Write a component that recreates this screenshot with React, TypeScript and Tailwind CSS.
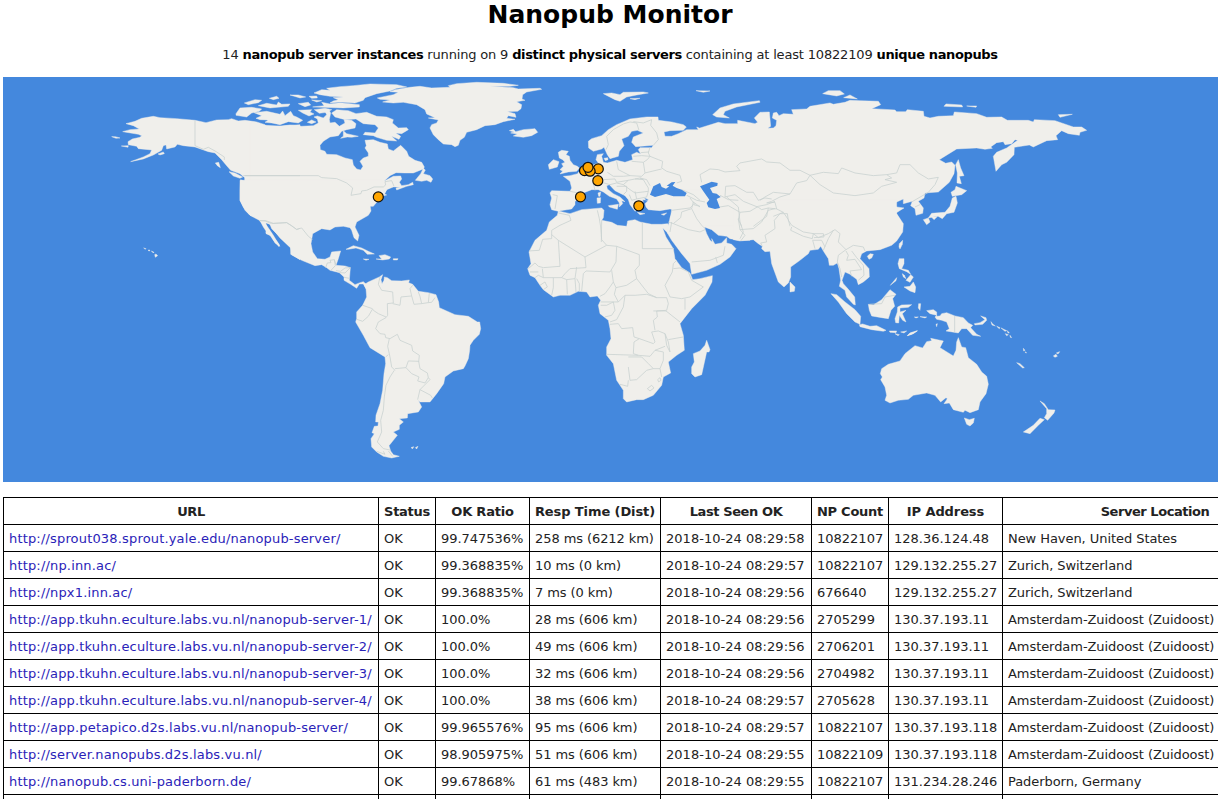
import React from "react";

type Region = {
  x: number;
  y: number;
  land: string[];
  water?: string[];
  borders?: string[];
};

// Every region holds its outlines in thirds of a pixel, relative to its own origin.
const regions: Region[] = [
  {
    x: 100,
    y: 76,
    land: [
      "78,142 105,135 125,126 160,120 180,124 230,127 285,132 318,139 350,131 385,130 395,127 415,134 435,132 470,137 495,145 500,150 545,149 600,145 600,550 575,535 572,515 540,485 520,460 512,445 497,439 500,452 515,475 530,495 540,510 525,500 515,480 498,470 500,460 490,445 478,432 450,417 430,392 420,372 420,345 422,310 434,315 434,304 420,292 392,282 380,268 365,250 345,230 325,226 285,212 250,208 232,204 225,212 200,218 198,205 208,202 190,208 185,222 160,236 130,248 92,256 130,242 150,232 155,221 115,217 110,210 85,205 84,196 97,188 120,183 125,178 115,174 68,166 90,160 118,158 100,148",
      "174,233 190,227 193,232 180,236",
      "346,260 356,258 361,274 352,268",
      "387,286 405,290 428,302 420,306 400,299",
      "35,181 46,181 60,185 48,186",
      "64,209 85,208 84,213",
      "131,515 138,517 136,519",
      "145,521 149,521 149,524 146,524",
      "154,524 162,528 160,530",
      "164,535 168,533 173,538 166,543",
    ],
    borders: ["285,133 285,208 310,219 325,213 345,224 373,242 373,251", "430,298 600,298", "478,433 497,433 520,441 560,439 575,448 590,460 600,456"],
  },
  {
    x: 230,
    y: 76,
    land: [
      "60,138 80,143 105,147 150,150 180,146 215,150 250,148 265,140 262,128 252,122 262,119 280,125 290,115 285,105 295,98 302,110 298,130 300,140 315,138 328,150 345,140 342,130 365,132 378,142 375,155 350,160 335,165 325,178 300,182 280,195 270,207 271,220 285,225 290,234 320,235 345,245 367,250 370,266 380,278 392,281 399,270 390,255 400,245 415,240 415,230 405,215 409,208 405,192 430,190 450,198 472,203 475,218 490,224 512,207 530,225 536,240 555,252 575,258 583,272 580,278 550,290 525,290 498,289 480,298 462,315 490,300 512,299 515,308 508,318 515,328 535,325 548,318 550,325 530,330 500,341 498,335 510,332 490,332 470,340 463,352 470,356 455,360 430,390 60,390",
      "332,186 340,180 340,163 350,172 385,180 365,183 352,182",
      "305,110 320,100 355,103 378,112 410,108 440,120 470,122 490,130 487,140 505,155 530,154 535,160 515,172 497,170 512,180 507,189 485,180 500,194 470,192 440,183 430,178 400,175 405,168 435,170 445,155 435,145 400,142 378,128 345,130 315,122",
      "78,126 95,118 72,109 110,105 150,114 158,104 165,118 182,105 190,118 200,122 218,132 205,140 175,136 150,145 125,140 105,138 115,131 90,130",
      "18,112 30,95 65,93 95,98 88,105 65,110 50,122 18,117",
      "205,102 245,100 240,107 252,113 237,119 218,110",
      "232,138 245,131 258,137 245,142",
      "253,100 285,96 305,100 290,108 268,111",
      "248,92 282,88 275,78 300,83 330,79 388,85 388,92 340,95 275,93",
      "252,50 275,40 300,42 290,36 330,31 370,28 420,23 500,25 530,32 500,36 480,44 440,52 405,64 400,72 375,80 330,77 300,80 310,74 325,70 310,64 340,62 300,60 270,55",
      "237,60 260,59 262,65 245,66",
      "245,71 275,73 260,77",
      "205,82 235,78 242,86 225,91",
      "180,56 205,56 227,62 210,65",
      "85,88 110,81 140,86 145,77 155,84 180,83 175,90 120,95",
      "43,80 75,70 95,72 85,79 55,85",
      "118,66 140,60 147,66 130,70",
      "556,312 572,292 580,276 586,281 580,292 600,298 608,308 603,318 590,312 575,315",
    ],
    borders: ["45,298 265,298 275,304 320,307 350,320 368,335 363,357 393,352 395,344 410,342 432,332 460,332 467,326 465,316 485,313 492,330"],
  },
  {
    x: 370,
    y: 76,
    land: [
      "22,65 70,55 85,48 60,46 75,40 120,33 150,30 185,35 240,33 235,28 260,22 320,18 400,21 445,27 420,30 360,30 430,34 445,38 510,36 515,39 470,47 458,55 456,68 465,72 440,76 455,85 453,97 443,105 412,106 435,112 438,123 415,118 410,126 435,129 400,136 375,145 345,148 320,160 290,168 283,183 270,192 265,207 255,211 245,205 220,203 205,190 190,175 180,155 185,145 200,140 205,131 175,125 195,124 170,113 165,100 140,85 100,78 70,80 38,77 60,71 30,69",
      "418,163 430,159 437,166 460,160 495,157 503,168 485,178 460,183 430,179 442,173 422,170 433,167",
    ],
  },
  {
    x: 230,
    y: 180,
    land: [
      "30,0 30,60 45,90 60,105 85,115 92,125 100,140 108,152 108,160 120,165 130,180 147,199 148,193 138,178 130,165 120,150 105,128 118,127 125,145 145,165 165,185 182,200 182,222 215,240 255,256 275,253 290,262 300,270 328,277 342,290 342,300 362,312 380,324 388,311 400,311 408,325 412,315 400,304 390,307 375,313 358,300 361,262 345,257 318,255 325,235 332,212 305,215 300,230 285,237 262,235 248,215 243,190 248,160 275,145 300,149 315,140 340,138 360,142 365,150 372,172 383,182 387,165 375,140 380,125 415,105 423,92 420,75 430,60 460,48 470,28 455,0",
      "348,207 370,196 395,203 415,213 433,221 412,222 400,210 378,203 355,207",
      "438,236 455,236 447,226 465,223 482,230 478,236 458,239",
      "400,236 417,237 408,240",
      "490,235 504,235 502,239 490,239",
    ],
    borders: [
      "88,121 105,122 125,130 170,127 200,147 215,143 235,168 247,177",
      "287,262 292,248 303,247 300,240 313,238 318,254",
      "313,238 316,256 303,270",
      "318,271 332,273 345,263 361,262",
      "328,277 345,278 361,262",
      "342,291 358,294",
    ],
  },
  {
    x: 340,
    y: 260,
    land: [
      "72,73 85,65 100,58 118,50 128,43 123,58 126,70 132,60 133,50 142,52 155,61 185,62 208,59 206,67 218,72 235,93 265,97 288,103 296,125 298,142 320,152 345,163 385,168 412,185 419,185 422,205 418,222 400,240 390,255 389,270 385,295 375,317 370,325 340,332 315,350 311,370 290,400 270,425 240,425 235,420 245,440 235,455 203,460 202,473 178,475 190,485 178,495 178,507 160,515 172,525 160,540 147,556 152,572 160,583 178,588 155,593 130,588 110,575 95,560 93,535 103,520 96,517 103,498 114,497 115,485 107,485 108,465 120,430 128,390 132,340 137,310 135,290 90,262 70,225 47,185 50,175 50,155 68,135 80,110 78,85",
      "213,562 221,559 218,565",
      "226,562 234,558 230,566",
    ],
    borders: [
      "120,50 115,72 125,90 158,95 160,128 142,130 143,165 138,172 115,185 107,205 120,220 135,222 137,232 150,235 172,222",
      "158,130 180,135 183,110 215,107 210,85 218,75",
      "215,107 222,132 245,130 240,108 235,95",
      "268,98 265,127 245,130",
      "265,127 275,126 285,112",
      "68,135 97,145 100,150 115,160 138,170",
      "97,147 85,168 68,183 50,177",
      "148,235 143,258 150,290 155,320 165,330",
      "137,290 145,283",
      "172,222 180,240 215,255 218,272 238,285 236,305",
      "236,303 205,302 198,322 165,325",
      "198,322 215,340 237,350 233,362 255,368 265,352 262,338 240,325 236,303",
      "265,352 270,358 240,388 272,405 277,413",
      "240,388 233,418",
      "163,330 150,350 138,375 133,410 130,450 122,480 125,515 112,545 130,565 150,569",
      "110,573 135,582 130,573",
      "145,572 158,588",
    ],
  },
  {
    x: 520,
    y: 76,
    land: [
      "570,148 545,158 530,152 535,160 500,160 475,172 455,180 435,180 432,167 450,163 490,162 499,152 490,145 455,137 415,132 414,122 380,122 330,128 290,145 265,160 245,178 215,187 205,195 206,215 220,225 245,218 252,213 262,235 270,247 295,240 298,225 312,208 305,188 325,180 335,165 352,162 370,170 340,182 335,198 347,211 400,207 395,214 360,214 355,220 362,233 350,228 335,235 338,250 315,258 290,252 262,260 250,258 245,240 250,232 232,235 228,250 235,260 205,272 190,280 175,288 173,292 150,298 130,300 150,315 155,335 150,345 95,343 90,350 95,365 90,385 95,400 115,405 130,402 155,398 165,385 165,375 195,360 190,350 215,340 235,340 250,347 268,360 290,368 298,380 298,392 308,382 305,373 315,376 300,362 280,352 262,338 260,328 268,325 285,343 315,358 325,370 330,385 345,405 352,400 348,388 370,378 368,370 385,372 375,382 378,392 385,400 420,403 450,398 460,400 450,425 447,445 450,450 570,450",
      "115,228 125,222 145,225 138,235 148,240 150,252 160,265 172,270 178,275 170,285 145,287 120,293 128,284 120,280 130,270 125,262 135,258 128,250 118,245",
      "85,265 100,250 117,256 112,272 88,279",
      "252,246 263,244 264,250 256,253",
      "234,350 242,347 240,360 236,360",
      "231,365 242,364 241,380 232,381",
      "265,388 295,384 292,399 268,392",
      "352,408 375,412 360,415",
      "424,414 440,410 432,417",
      "250,52 275,50 300,55 310,48 370,47 385,50 350,56 320,62 300,75 285,70",
      "330,67 360,66 345,70",
      "528,43 570,44 550,48",
    ],
    water: [
      "390,355 400,330 420,320 425,332 438,337 448,330 440,328 455,318 466,317 458,328 470,335 485,340 500,350 495,360 460,360 438,353 405,362",
      "373,366 386,369 378,371",
    ],
    borders: [
      "258,220 265,205 260,180 280,160 310,143 330,137 350,140 357,162",
      "340,136 370,140 395,130 392,147 410,170 415,190 400,207",
      "390,213 385,230 390,240 415,250 428,255 425,275 440,285 480,297 485,315 470,320",
      "340,240 365,238 390,240",
      "362,229 387,227",
      "335,255 370,258 382,250 390,240",
      "370,258 375,290 425,278",
      "290,255 295,280 330,298 365,300 375,290",
      "262,288 280,300 310,300 330,298",
      "250,310 285,308 290,318 325,312 360,305 370,310",
      "235,265 232,285",
      "200,280 225,300 220,322 225,342",
      "225,322 245,318 270,325",
      "150,345 190,353",
      "98,355 112,358 105,398",
      "270,325 290,320 310,325 325,312",
      "290,330 320,330 320,345 310,355",
      "310,325 330,340 345,350 385,345",
      "345,308 370,310 385,335 385,345",
      "385,345 380,362 350,368 335,372 328,355",
      "345,345 350,368",
      "360,305 380,310 390,328",
      "485,340 520,355 540,372",
      "510,365 525,385",
      "455,402 510,395 520,385 540,390",
    ],
  },
  {
    x: 510,
    y: 190,
    land: [
      "145,62 158,65 180,70 215,58 275,53 282,60 280,82 275,90 305,96 322,105 350,108 353,92 375,88 390,95 425,102 455,102 473,100 478,110 475,130 458,113 468,140 490,175 495,205 515,232 540,248 548,268 570,265 607,256 606,275 585,315 545,355 510,400 520,435 523,480 500,495 475,515 482,548 460,560 455,585 430,615 400,628 380,628 350,635 340,625 340,600 320,570 310,520 290,495 290,470 303,445 300,415 295,390 270,370 265,345 272,330 262,317 240,320 230,305 205,303 180,315 150,315 130,320 100,298 90,285 75,262 60,255 53,235 63,220 57,185 75,150 110,120 118,95 142,75",
      "485,58 480,90 474,108 472,128 485,150 515,190 540,220 545,252 590,240 630,222 660,200 678,175 665,162 650,158 650,142 635,158 615,162 605,145 607,155 600,150 590,130 583,110 605,118 625,135 650,138 660,145 690,150 720,150 720,0 500,0",
      "590,450 600,478 597,485 590,485 575,553 555,560 545,550 545,530 553,515 550,490 570,482 585,465",
    ],
    borders: [
      "145,68 178,75 183,90 150,105 125,120 125,145 98,147 88,180 57,182",
      "125,133 145,150 225,200 290,165 275,148 272,110 268,85 262,60",
      "145,150 150,228 100,232 85,228 75,218 55,235",
      "225,200 228,232 180,235 165,250 155,262",
      "275,90 274,155",
      "290,165 320,168 388,193",
      "397,95 397,175 492,175",
      "320,168 318,215 300,245 228,242 220,250 215,303",
      "388,193 388,225 375,240 380,265 415,310 440,322",
      "380,265 350,285 318,292 310,275 305,240",
      "310,275 300,290 285,310 270,318",
      "60,245 85,245",
      "75,262 85,255 100,262 97,235",
      "100,262 130,262 130,292 125,315",
      "90,285 105,275 112,290 100,298",
      "130,262 155,262 170,268 172,312",
      "170,268 195,265 198,305",
      "200,265 208,280 208,303",
      "195,265 200,230",
      "318,292 313,312 325,335 272,335",
      "272,345 290,345 310,335 315,360 305,375 285,380",
      "325,335 345,315 375,315 410,312 440,322 470,322 475,340 470,360 440,362 442,380 430,390 435,420",
      "345,315 340,350 320,388 300,395",
      "300,402 325,400 335,415 368,412 372,440 388,445 372,455 370,490 385,495 290,492",
      "388,445 430,460 435,455 425,425 445,422 465,430 470,465 480,485 475,455 465,430",
      "475,448 520,440",
      "430,362 468,362 510,395",
      "500,210 490,220 487,245 465,285 480,320 515,325 540,320 580,290 545,270 535,245 510,233 490,235",
      "525,325 525,358",
      "385,495 420,498 435,480 465,468",
      "355,500 395,500 415,520 430,535 410,540 380,568 360,570 355,530",
      "355,570 353,588 330,582",
      "430,535 450,535 460,510 460,485 435,480",
      "450,535 455,560",
      "412,595 425,585 432,593 420,602 412,595",
      "443,568 450,562 453,570 446,575 443,568",
      "475,95 490,100 512,82 515,65 545,55",
      "490,100 535,118 570,125 585,118",
      "485,95 480,125",
      "545,215 600,210 640,195 645,168",
      "617,200 622,218",
      "545,55 560,85 575,105 585,115",
      "530,15 560,30 585,35",
      "545,55 550,35 570,50",
      "630,15 655,28 685,30",
      "650,20 685,50 690,95 700,125 690,145",
    ],
  },
  {
    x: 700,
    y: 76,
    land: [
      "0,155 55,138 75,142 113,142 113,132 165,142 173,138 163,125 180,108 208,107 212,150 203,156 220,155 228,148 230,132 217,125 220,110 230,108 237,118 250,112 280,114 275,100 320,98 330,90 390,80 400,84 435,78 450,72 480,73 535,75 542,85 515,97 585,101 590,106 617,106 622,100 670,105 672,120 690,125 715,120 760,118 763,107 830,112 860,123 905,122 922,132 985,132 1000,137 1003,130 1065,133 1085,140 1120,152 1145,152 1160,162 1140,168 1138,177 1105,172 1085,163 1068,178 1073,190 1040,193 1000,212 988,206 943,213 942,235 920,258 905,265 888,285 880,240 890,228 920,215 953,192 945,190 935,202 915,205 910,196 890,199 872,212 877,216 855,219 830,215 770,218 718,250 737,261 755,257 765,267 762,292 748,318 715,347 675,350 672,365 655,375 670,395 668,411 648,417 645,397 632,388 637,375 610,382 610,368 577,383 590,392 612,395 588,410 600,430 608,450 0,450",
      "38,115 60,95 100,83 178,73 180,78 110,92 75,105 70,115 88,125 50,122",
      "368,52 385,43 420,43 433,53 410,59",
      "431,64 450,56 472,68",
      "732,90 738,83 785,86 788,92",
      "800,89 830,89 828,93",
      "1075,115 1117,114 1080,123",
      "775,250 782,275 792,298 778,300 784,322 771,320 772,290 767,265",
      "753,348 765,340 768,330 800,343 785,355 757,360",
      "768,360 772,380 762,408 740,412 727,427 713,419 685,425 695,411 735,408 750,390 757,365",
      "670,430 685,425 690,437 680,445",
      "695,423 713,420 702,430",
    ],
    water: [
      "0,330 20,322 35,316 53,320 52,328 30,335 38,350 50,352 62,362 50,368 60,395 45,398 25,393 20,380 28,370 10,345",
    ],
    borders: [
      "5,318 0,295 30,278 55,280 75,287 120,283 110,270 120,260 185,248 200,257 240,260 270,282 300,282 330,297 370,288 415,292 425,275 465,290 520,298 560,295 575,305 555,310 590,318 545,330 520,350 465,358 400,350 360,325 330,297",
      "560,295 590,290 600,265 630,265 655,290 685,308 715,303 705,325 685,348 635,377",
      "330,297 320,313 290,320 270,353 220,348 195,362 180,372",
      "75,362 77,330 105,328 140,348 160,348 175,372 195,365 215,368",
      "60,392 85,388 120,408 150,405 175,390 200,385 225,375",
      "75,362 105,355 130,375 175,393",
      "270,353 240,362 215,375 200,380 225,378 230,398 250,408 265,430 270,450",
      "120,408 115,430 125,450",
      "175,393 185,400 205,395 200,420 160,450",
      "205,395 230,398",
      "220,420 250,408",
      "645,392 660,385",
    ],
  },
  {
    x: 700,
    y: 180,
    land: [
      "100,178 120,182 160,178 175,190 187,198 185,205 195,214 210,213 215,250 235,305 252,320 265,308 272,290 272,260 300,240 325,220 330,210 355,207 362,198 372,215 385,235 388,255 400,255 412,248 417,265 422,300 418,318 435,330 440,350 460,372 466,374 464,350 445,327 430,310 426,300 435,275 450,282 470,297 475,313 490,305 508,290 507,265 480,235 485,220 500,212 540,208 575,195 590,182 608,155 610,130 590,100 590,60 100,60",
      "270,305 285,320 283,333 270,335",
      "502,228 510,220 520,222 515,233 507,237",
      "597,200 598,190 608,180 607,192 600,206",
      "393,340 410,343 435,365 465,388 482,408 480,432 465,425 440,400 415,365",
      "478,433 488,431 510,438 530,436 558,450 550,453 515,448 480,439",
      "568,452 590,452 588,457 570,456",
      "602,455 620,452 612,458",
      "585,460 598,463 594,466",
      "622,466 630,458 652,451 640,460",
      "505,372 520,374 545,358 570,328 588,342 578,355 584,378 573,390 565,415 545,412 515,407 508,390",
      "593,380 605,374 635,373 625,381 600,383 600,395 618,390 607,400 618,425 608,420 598,405 596,428 587,427 585,415 592,395",
      "656,370 662,370 660,390 655,383",
      "643,410 655,410 648,413",
      "660,409 680,410 675,413",
      "598,235 612,235 612,250 605,265 625,270 632,282 620,274 598,265 594,250",
      "618,300 632,283 640,290 630,306",
      "607,280 613,285 618,295 610,290",
      "612,320 630,318 640,305 647,320 645,337 630,332",
      "571,315 590,292 588,301",
    ],
    borders: [
      "187,198 182,188 200,185 195,165 225,145 223,120 240,100 262,100 265,120 275,135 310,155 340,160 355,172 385,160 405,148 420,160 415,185 438,208",
      "275,140 272,150 310,168 337,175 340,160",
      "340,160 370,160 372,170 342,172",
      "345,205 338,180 365,180 375,200",
      "370,210 385,175 400,150",
      "438,208 415,225 412,245 420,265 425,290",
      "438,212 445,225 440,240 465,237 485,268 450,272 455,288",
      "438,208 460,195 490,200 495,212",
      "455,212 470,232 490,255 492,285 475,300",
      "508,372 545,370 555,350 585,345",
      "115,115 120,148 135,165 122,182",
      "120,148 160,145 185,125 205,90 225,85",
    ],
  },
  {
    x: 820,
    y: 220,
    land: [
      "320,271 340,268 350,275 350,288 360,287 365,280 380,277 405,287 430,292 445,308 458,315 452,322 470,342 482,348 458,345 440,325 425,325 415,338 378,332 388,325 380,305 365,300 350,297 345,290 350,285 330,280",
      "463,310 480,307 495,298 482,287 498,292 500,300 488,312 465,314",
      "513,304 518,311 526,317 516,314",
      "530,318 540,322 538,325",
      "543,323 560,331 555,333",
      "556,340 565,343 560,346",
      "562,331 568,338 564,338",
      "570,345 575,352 571,351",
      "610,384 615,390 611,392",
      "616,394 620,398 616,397",
      "590,427 600,430 613,442 608,443",
      "700,407 708,402 712,408 705,411",
      "709,398 719,394 714,401",
      "348,312 352,310 350,319",
      "262,346 272,338 292,332 275,342",
      "185,445 205,432 240,422 255,400 265,392 285,376 308,383 320,364 335,361 332,354 370,362 360,382 400,407 408,390 410,365 415,352 425,380 437,382 445,412 470,432 485,455 500,468 505,492 498,520 480,545 475,568 450,577 435,570 430,576 400,568 388,548 372,550 382,535 378,532 362,545 345,525 320,518 280,525 265,537 235,540 210,548 195,540 200,525 195,500 182,478 187,470 181,460",
      "433,593 448,598 463,594 460,608 450,617 440,612",
      "660,542 673,550 685,568 705,569 702,578 683,600 673,592 680,580 680,565",
      "660,594 673,598 655,615 630,640 610,635 640,615",
    ],
    borders: ["404,287 404,335"],
  },
];

const markers: [number, number][] = [
  [378.3, 196.9],
  [584.5, 170.6],
  [598.3, 168.9],
  [590.1, 171.2],
  [588, 167.3],
  [597.8, 180.7],
  [580.5, 196.9],
  [638.8, 205.8],
];

function WorldMap() {
  const place = (r: Region) => `translate(${r.x} ${r.y + 0.3}) scale(0.33333)`;
  return (
    <svg className="block h-[405px] w-[1215px] bg-[#4488dd]" viewBox="3 77 1215 405">
      <g fill="#f0efeb" stroke="#f0efeb" strokeWidth="1.3" strokeLinejoin="round">
        {regions.map((r, i) => (
          <g key={i} transform={place(r)}>
            {r.land.map((p, j) => (
              <polygon key={j} points={p} />
            ))}
          </g>
        ))}
      </g>
      <g fill="none" stroke="#c9d2d1" strokeWidth="2.4" strokeLinejoin="round">
        {regions.map((r, i) => (
          <g key={i} transform={place(r)}>
            {r.borders?.map((p, j) => (
              <polyline key={j} points={p} />
            ))}
          </g>
        ))}
      </g>
      <g fill="#4488dd">
        {regions.map((r, i) => (
          <g key={i} transform={place(r)}>
            {r.water?.map((p, j) => (
              <polygon key={j} points={p} />
            ))}
          </g>
        ))}
      </g>
      <g fill="#ffa500" stroke="#111" strokeWidth="1.2">
        {markers.map(([x, y], i) => (
          <circle key={i} cx={x} cy={y} r="5" />
        ))}
      </g>
    </svg>
  );
}

const columns = [
  { title: "URL", head: "tracking-[-0.4px]", body: "tracking-[0.17px]" },
  { title: "Status", head: "tracking-[-0.3px]", body: "" },
  { title: "OK Ratio", head: "tracking-[-0.2px]", body: "tracking-[-0.03px]" },
  { title: "Resp Time (Dist)", head: "tracking-[-0.1px]", body: "tracking-[-0.08px]" },
  { title: "Last Seen OK", head: "tracking-[-0.4px]", body: "tracking-[0.03px]" },
  { title: "NP Count", head: "tracking-[-0.25px]", body: "" },
  { title: "IP Address", head: "tracking-[-0.1px]", body: "" },
  { title: "Server Location", head: "tracking-[-0.45px]", body: "tracking-[-0.06px]" },
];

const zuidoost = "Amsterdam-Zuidoost (Zuidoost)";

const rows = [
  ["http://sprout038.sprout.yale.edu/nanopub-server/", "OK", "99.747536%", "258 ms (6212 km)", "2018-10-24 08:29:58", "10822107", "128.36.124.48", "New Haven, United States"],
  ["http://np.inn.ac/", "OK", "99.368835%", "10 ms (0 km)", "2018-10-24 08:29:57", "10822107", "129.132.255.27", "Zurich, Switzerland"],
  ["http://npx1.inn.ac/", "OK", "99.368835%", "7 ms (0 km)", "2018-10-24 08:29:56", "676640", "129.132.255.27", "Zurich, Switzerland"],
  ["http://app.tkuhn.eculture.labs.vu.nl/nanopub-server-1/", "OK", "100.0%", "28 ms (606 km)", "2018-10-24 08:29:56", "2705299", "130.37.193.11", zuidoost],
  ["http://app.tkuhn.eculture.labs.vu.nl/nanopub-server-2/", "OK", "100.0%", "49 ms (606 km)", "2018-10-24 08:29:56", "2706201", "130.37.193.11", zuidoost],
  ["http://app.tkuhn.eculture.labs.vu.nl/nanopub-server-3/", "OK", "100.0%", "32 ms (606 km)", "2018-10-24 08:29:56", "2704982", "130.37.193.11", zuidoost],
  ["http://app.tkuhn.eculture.labs.vu.nl/nanopub-server-4/", "OK", "100.0%", "38 ms (606 km)", "2018-10-24 08:29:57", "2705628", "130.37.193.11", zuidoost],
  ["http://app.petapico.d2s.labs.vu.nl/nanopub-server/", "OK", "99.965576%", "95 ms (606 km)", "2018-10-24 08:29:57", "10822107", "130.37.193.118", zuidoost],
  ["http://server.nanopubs.d2s.labs.vu.nl/", "OK", "98.905975%", "51 ms (606 km)", "2018-10-24 08:29:55", "10822109", "130.37.193.118", zuidoost],
  ["http://nanopub.cs.uni-paderborn.de/", "OK", "99.67868%", "61 ms (483 km)", "2018-10-24 08:29:55", "10822107", "131.234.28.246", "Paderborn, Germany"],
  ["", "", "", "", "", "", "", ""],
];

function Strong({ children }: { children: React.ReactNode }) {
  return <b className="tracking-[-0.37px] text-black">{children}</b>;
}

export default function App() {
  return (
    <div className="h-[799px] w-full overflow-hidden bg-white pl-[3px] font-['DejaVu_Sans',sans-serif] text-[13px] text-[#222]">
      <div className="w-[1214px] text-center">
        <h1 className="h-[46px] text-[25px] leading-[29px] font-bold text-black">Nanopub Monitor</h1>
        <p className="h-[31px] leading-[17px] tracking-[-0.17px]">
          14 <Strong>nanopub server instances</Strong> running on 9 <Strong>distinct physical servers</Strong> containing at
          least 10822109 <Strong>unique nanopubs</Strong>
        </p>
      </div>
      <WorldMap />
      <table className="mt-[15px] w-[1304px] table-fixed border-collapse whitespace-nowrap">
        <colgroup>
          <col className="w-[375px]" />
          <col className="w-[57px]" />
          <col className="w-[94px]" />
          <col className="w-[131px]" />
          <col className="w-[151px]" />
          <col className="w-[77px]" />
          <col className="w-[114px]" />
          <col className="w-[305px]" />
        </colgroup>
        <thead>
          <tr className="h-[27px]">
            {columns.map((c) => (
              <th key={c.title} className={`border border-black px-0 pt-[2px] pb-0 text-center leading-[16px] font-bold ${c.head}`}>
                {c.title}
              </th>
            ))}
          </tr>
        </thead>
        <tbody>
          {rows.map((row, i) => (
            <tr key={i} className="h-[27px]">
              {row.map((cell, j) => (
                <td key={j} className={`border border-black pt-[2px] pr-0 pb-0 pl-[5px] leading-[16px] ${columns[j].body}`}>
                  {j === 0 ? (
                    <a href="#" className="text-[#2a22b8]">
                      {cell}
                    </a>
                  ) : (
                    cell
                  )}
                </td>
              ))}
            </tr>
          ))}
        </tbody>
      </table>
    </div>
  );
}
